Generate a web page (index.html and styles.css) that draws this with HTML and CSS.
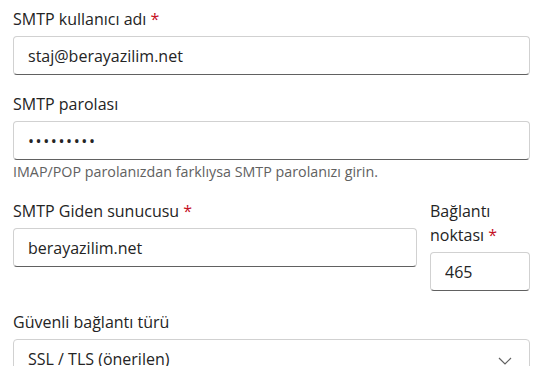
FILE: index.html
```html
<!DOCTYPE html>
<html lang="tr">
<head>
    <meta charset="UTF-8">
    <meta name="viewport" content="width=device-width, initial-scale=1.0">
    <title>SMTP ayarları</title>
    <link rel="stylesheet" href="styles.css">
</head>
<body>
    <div id="panel">
        <form id="smtp-form">
            <div class="field">
                <label for="smtpUser">SMTP kullanıcı adı <span class="req">*</span></label>
                <input type="text" id="smtpUser" value="staj@berayazilim.net">
            </div>
            <div class="field">
                <label for="smtpPass">SMTP parolası</label>
                <input type="password" id="smtpPass" class="secret" value="123456789">
                <div class="hint">IMAP/POP parolanızdan farklıysa SMTP parolanızı girin.</div>
            </div>
            <div class="row">
                <div class="field grow">
                    <label for="smtpHost">SMTP Giden sunucusu <span class="req">*</span></label>
                    <input type="text" id="smtpHost" value="berayazilim.net">
                </div>
                <div class="field port">
                    <label for="smtpPort">Bağlantı noktası <span class="req">*</span></label>
                    <input type="text" id="smtpPort" value="465">
                </div>
            </div>
            <div class="field">
                <label for="smtpSec">Güvenli bağlantı türü</label>
                <div class="select-wrap">
                    <select id="smtpSec">
                        <option>SSL / TLS (önerilen)</option>
                        <option>STARTTLS</option>
                        <option>Yok</option>
                    </select>
                    <svg class="chevron" width="14" height="8" viewBox="0 0 14 8">
                        <path d="M1 1 L7 7 L13 1" fill="none" stroke="#616161" stroke-width="1.2"/>
                    </svg>
                </div>
            </div>
        </form>
    </div>
</body>
</html>
```

FILE: styles.css
```css
body {
    margin: 0;
    padding: 0;
    background-color: #fff;
    font-family: "Open Sans", "Noto Sans", sans-serif;
    color: #242424;
}

#panel {
    height: 366px;
    overflow: hidden;
    padding: 7px 24px 0 13px;
    box-sizing: border-box;
}

.field {
    display: flex;
    flex-direction: column;
    margin-bottom: 17px;
}

label {
    font-size: 16px;
    line-height: 24px;
    margin-bottom: 5px;
}

.req {
    color: #c50f1f;
}

input, select {
    height: 39px;
    box-sizing: border-box;
    padding: 0 14px;
    border: 1px solid #d1d1d1;
    border-bottom-color: #616161;
    border-radius: 4px;
    font-family: inherit;
    font-size: 16px;
    color: #242424;
    background-color: #fff;
    outline: none;
}

.secret {
    letter-spacing: 1.6px;
}

.hint {
    font-size: 14.3px;
    line-height: 20px;
    margin-top: 2px;
    color: #616161;
}

.row {
    display: flex;
    gap: 13px;
    align-items: flex-end;
    margin-bottom: 2px;
}

.grow {
    flex: 1;
}

.row .grow {
    align-self: flex-start;
}

.port {
    width: 100px;
}

.select-wrap {
    position: relative;
}

select {
    width: 100%;
    appearance: none;
    border-bottom-color: #d1d1d1;
}

.chevron {
    position: absolute;
    right: 18px;
    top: 18px;
}
```
